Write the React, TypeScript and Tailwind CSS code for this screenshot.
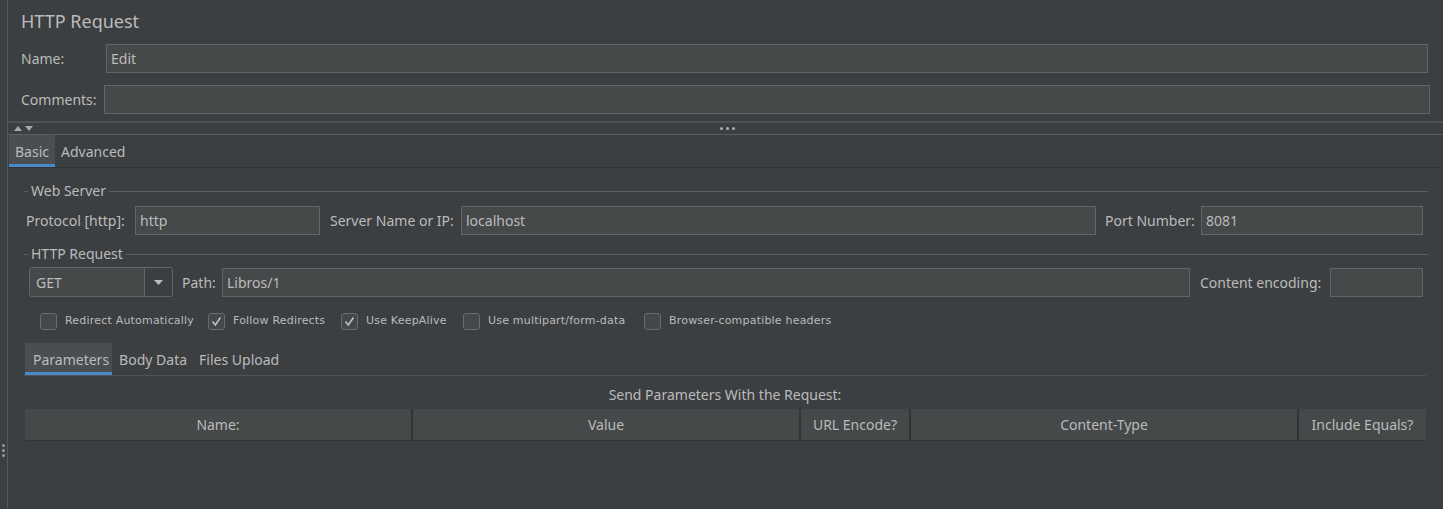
import React from "react";

const ui = { fontFamily: '"Noto Sans", "Open Sans", sans-serif' };
const small = { fontFamily: '"DejaVu Sans", "Liberation Sans", sans-serif' };

function Field({ w, value, className = "" }: { w?: string; value?: string; className?: string }) {
  return (
    <div
      className={`h-[29px] bg-[#45494a] border border-[#646464] flex items-center px-[4px] text-[14px] text-[#bbbbbb] ${w ?? ""} ${className}`}
    >
      {value}
    </div>
  );
}

function GroupTitle({ title }: { title: string }) {
  return (
    <div className="h-[16px] flex items-center mr-[15px] text-[14px] text-[#bbbbbb]">
      <div className="w-[4px] h-px bg-[#5b5e60]" />
      <span className="px-[3px] leading-[16px]">{title}</span>
      <div className="flex-1 h-px bg-[#5b5e60]" />
    </div>
  );
}

function Check({ label, checked, w }: { label: string; checked?: boolean; w: string }) {
  return (
    <div className={`flex items-center gap-[8px] ${w}`}>
      <div className="w-[17px] h-[17px] rounded-[3px] border border-[#6b6b6b] bg-[#43494a] flex items-center justify-center">
        {checked && (
          <svg width="11" height="11" viewBox="0 0 11 11">
            <path d="M1.5 5.5 L4.3 9 L9.5 1.5" fill="none" stroke="#c4c4c4" strokeWidth="1.5" />
          </svg>
        )}
      </div>
      <span style={small} className="text-[11px] text-[#bbbbbb] tracking-[0.2px] whitespace-nowrap">
        {label}
      </span>
    </div>
  );
}

export default function App() {
  return (
    <div style={ui} className="w-[1443px] h-[509px] bg-[#3c3f41] flex overflow-hidden text-[#bbbbbb]">
      {/* left handle strip */}
      <div className="w-[7px] flex flex-col items-center pt-[444px] gap-[2px]">
        <div className="w-[3px] h-[3px] rounded-full bg-[#9a9a9a]" />
        <div className="w-[3px] h-[3px] rounded-full bg-[#9a9a9a]" />
        <div className="w-[3px] h-[3px] rounded-full bg-[#9a9a9a]" />
      </div>
      <div className="w-px bg-[#56595b]" />

      <div className="flex-1 flex flex-col">
        {/* title */}
        <div className="h-[44px] pl-[13px] pt-[7px]">
          <div className="text-[18px] leading-[28px]">HTTP Request</div>
        </div>

        {/* name / comments */}
        <div className="flex items-center pl-[13px] pr-[15px]">
          <div className="w-[85px] text-[14px]">Name:</div>
          <Field value="Edit" className="flex-1" />
        </div>
        <div className="flex items-center pl-[13px] pr-[13px] mt-[12px]">
          <div className="w-[83px] text-[14px]">Comments:</div>
          <Field className="flex-1" />
        </div>

        {/* splitter */}
        <div className="h-[7px]" />
        <div className="h-[2px] bg-[#505355]" />
        <div className="h-[11px] flex items-center">
          <div className="flex items-center gap-[3px] pl-[6px]">
            <svg width="8" height="5" viewBox="0 0 8 5">
              <path d="M0 5 L4 0 L8 5 Z" fill="#a9a9a9" />
            </svg>
            <svg width="8" height="5" viewBox="0 0 8 5">
              <path d="M0 0 L8 0 L4 5 Z" fill="#a9a9a9" />
            </svg>
          </div>
          <div className="flex-1 flex justify-center gap-[3px] pr-[22px]">
            <div className="w-[3px] h-[3px] rounded-full bg-[#b0b0b0]" />
            <div className="w-[3px] h-[3px] rounded-full bg-[#b0b0b0]" />
            <div className="w-[3px] h-[3px] rounded-full bg-[#b0b0b0]" />
          </div>
        </div>
        <div className="h-px bg-[#5a5d5f]" />

        {/* main tabs */}
        <div className="h-[33px] flex border-b border-[#323435] pl-px">
          <div className="relative bg-[#4a4e51] px-[6px] flex items-center text-[14px]">
            Basic
            <div className="absolute left-0 right-0 bottom-0 h-[3px] bg-[#4a88c7]" />
          </div>
          <div className="px-[6px] flex items-center text-[14px]">Advanced</div>
        </div>

        {/* content */}
        <div className="pl-[16px] pt-[15px] flex flex-col">
          <GroupTitle title="Web Server" />
          <div className="flex items-center mt-[7px] pl-[2px] text-[14px]">
            <div className="w-[109px] whitespace-nowrap">Protocol [http]:</div>
            <Field w="w-[185px]" value="http" />
            <div className="w-[141px] pl-[10px] whitespace-nowrap">Server Name or IP:</div>
            <Field w="w-[635px]" value="localhost" />
            <div className="w-[105px] pl-[9px] whitespace-nowrap">Port Number:</div>
            <Field w="w-[222px]" value="8081" />
          </div>

          <div className="mt-[11px]">
            <GroupTitle title="HTTP Request" />
          </div>
          <div className="flex items-center mt-[5px] pl-[5px] text-[14px]">
            <div className="w-[144px] h-[30px] rounded-[3px] border border-[#646464] flex overflow-hidden">
              <div className="flex-1 bg-[#45494a] flex items-center pl-[6px]">GET</div>
              <div className="w-[28px] border-l border-[#646464] bg-[#3c3f41] flex items-center justify-center">
                <svg width="9" height="5" viewBox="0 0 9 5">
                  <path d="M0 0 L9 0 L4.5 5 Z" fill="#bbbbbb" />
                </svg>
              </div>
            </div>
            <div className="w-[49px] pl-[9px]">Path:</div>
            <Field w="w-[968px]" value="Libros/1" />
            <div className="w-[140px] pl-[10px] whitespace-nowrap">Content encoding:</div>
            <Field w="w-[93px]" />
          </div>

          <div className="flex items-center mt-[16px] pl-[16px]">
            <Check w="w-[168px]" label="Redirect Automatically" />
            <Check w="w-[133px]" label="Follow Redirects" checked />
            <Check w="w-[122px]" label="Use KeepAlive" checked />
            <Check w="w-[181px]" label="Use multipart/form-data" />
            <Check w="w-[240px]" label="Browser-compatible headers" />
          </div>

          {/* parameter tabs */}
          <div className="mt-[13px] mr-[17px] h-[33px] flex border-b border-[#505355] pl-px">
            <div className="relative bg-[#4a4e51] pl-[8px] pr-[3px] flex items-center text-[14px]">
              Parameters
              <div className="absolute left-0 right-0 bottom-0 h-[3px] bg-[#4a88c7]" />
            </div>
            <div className="pl-[7px] pr-[6px] flex items-center text-[14px]">Body Data</div>
            <div className="px-[6px] flex items-center text-[14px]">Files Upload</div>
          </div>

          <div className="h-[20px] mt-[8px] mr-[17px] flex items-center justify-center text-[14px]">
            Send Parameters With the Request:
          </div>

          <div className="mt-[5px] mr-[17px] ml-px h-[32px] flex bg-[#45494a] border-b border-[#323435] text-[14px]">
            <div className="w-[388px] flex items-center justify-center border-r-2 border-[#323435]">Name:</div>
            <div className="w-[388px] flex items-center justify-center border-r-2 border-[#323435]">Value</div>
            <div className="w-[110px] flex items-center justify-center border-r-2 border-[#323435]">URL Encode?</div>
            <div className="w-[388px] flex items-center justify-center border-r-2 border-[#323435]">Content-Type</div>
            <div className="flex-1 flex items-center justify-center">Include Equals?</div>
          </div>
        </div>
      </div>
    </div>
  );
}
